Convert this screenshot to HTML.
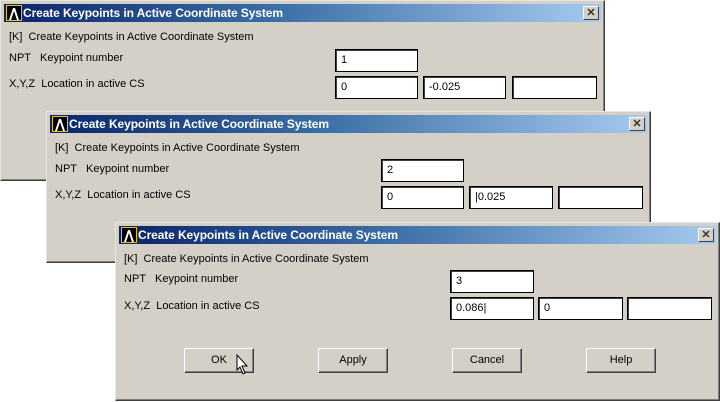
<!DOCTYPE html>
<html><head><style>
body{margin:0;width:720px;height:402px;background:#fff;position:relative;overflow:hidden;font-family:"Liberation Sans",Tahoma,sans-serif;font-size:11px;color:#000}
.dlg{position:absolute;width:603px;height:176px;background:#d4d0c8;border:1px solid;border-color:#e8e6e0 #404040 #404040 #e8e6e0;box-shadow:inset -1px -1px 0 #808080}
.tb{position:absolute;left:3px;top:3px;right:3px;height:18px;background:linear-gradient(to right,#0a246a 0%,#3a6ea5 45%,#a6caf0 100%);color:#fff;font-weight:bold;font-size:12px;line-height:18px}
.tb .ic{position:absolute;left:2px;top:1px;width:16px;height:16px;background:#f0c000}
.tb .ic div{position:absolute;left:1px;top:1px;width:14px;height:14px;background:#000}
.tb .t{position:absolute;left:19px;top:0;letter-spacing:-0.1px}
.cl{position:absolute;right:2px;top:2px;width:14px;height:12px;background:#d4d0c8;border:1px solid;border-color:#fff #404040 #404040 #fff;color:#333;font-size:11px;line-height:12px;text-align:center;font-weight:bold}
.l{position:absolute;white-space:nowrap}
.in{position:absolute;background:#fff;border:1px solid #000;box-shadow:inset 1px 1px 0 #404040;line-height:20px;padding-left:5px;box-sizing:border-box;height:23px}
.bt{position:absolute;top:125px;width:70px;height:25px;box-sizing:border-box;border:1px solid;border-color:#fff #404040 #404040 #fff;box-shadow:inset -1px -1px 0 #808080;text-align:center;line-height:23px}
</style></head><body>

<div class="dlg" style="left:0;top:0;height:179px">
<div class="tb"><div class="ic"><div><svg width="14" height="14"><path d="M2 14 L6 2 L8 2 L12 14 L10 14 L7 5 L4 14Z" fill="#fff"/></svg></div></div><span class="t">Create Keypoints in Active Coordinate System</span><div class="cl">✕</div></div>
<div class="l" style="left:8px;top:30px">[K]&nbsp; Create Keypoints in Active Coordinate System</div>
<div class="l" style="left:8px;top:51px">NPT</div><div class="l" style="left:39px;top:51px">Keypoint number</div>
<div class="l" style="left:8px;top:77px">X,Y,Z&nbsp; Location in active CS</div>
<div class="in" style="left:334px;top:48px;width:83px">1</div>
<div class="in" style="left:334px;top:75px;width:83px">0</div>
<div class="in" style="left:422px;top:75px;width:83px">-0.025</div>
<div class="in" style="left:511px;top:75px;width:85px"></div>
</div>

<div class="dlg" style="left:46px;top:111px;height:150px">
<div class="tb"><div class="ic"><div><svg width="14" height="14"><path d="M2 14 L6 2 L8 2 L12 14 L10 14 L7 5 L4 14Z" fill="#fff"/></svg></div></div><span class="t">Create Keypoints in Active Coordinate System</span><div class="cl">✕</div></div>
<div class="l" style="left:8px;top:30px">[K]&nbsp; Create Keypoints in Active Coordinate System</div>
<div class="l" style="left:8px;top:51px">NPT</div><div class="l" style="left:39px;top:51px">Keypoint number</div>
<div class="l" style="left:8px;top:77px">X,Y,Z&nbsp; Location in active CS</div>
<div class="in" style="left:334px;top:47px;width:83px">2</div>
<div class="in" style="left:334px;top:74px;width:83px">0</div>
<div class="in" style="left:422px;top:74px;width:84px">|0.025</div>
<div class="in" style="left:511px;top:74px;width:85px"></div>
</div>

<div class="dlg" style="left:115px;top:222px;height:177px">
<div class="tb"><div class="ic"><div><svg width="14" height="14"><path d="M2 14 L6 2 L8 2 L12 14 L10 14 L7 5 L4 14Z" fill="#fff"/></svg></div></div><span class="t">Create Keypoints in Active Coordinate System</span><div class="cl">✕</div></div>
<div class="l" style="left:8px;top:30px">[K]&nbsp; Create Keypoints in Active Coordinate System</div>
<div class="l" style="left:8px;top:50px">NPT</div><div class="l" style="left:39px;top:50px">Keypoint number</div>
<div class="l" style="left:8px;top:77px">X,Y,Z&nbsp; Location in active CS</div>
<div class="in" style="left:334px;top:47px;width:84px">3</div>
<div class="in" style="left:334px;top:74px;width:84px">0.086|</div>
<div class="in" style="left:422px;top:74px;width:85px">0</div>
<div class="in" style="left:511px;top:74px;width:85px"></div>
<div class="bt" style="left:68px">OK</div>
<div class="bt" style="left:202px">Apply</div>
<div class="bt" style="left:336px">Cancel</div>
<div class="bt" style="left:470px">Help</div>
<svg style="position:absolute;left:120px;top:131px" width="14" height="22"><path d="M1 1 L1 16 L4 13 L7 20 L9 19 L6 12 L11 12 Z" fill="#fff" stroke="#000" stroke-width="1"/></svg>
</div>
</body></html>
